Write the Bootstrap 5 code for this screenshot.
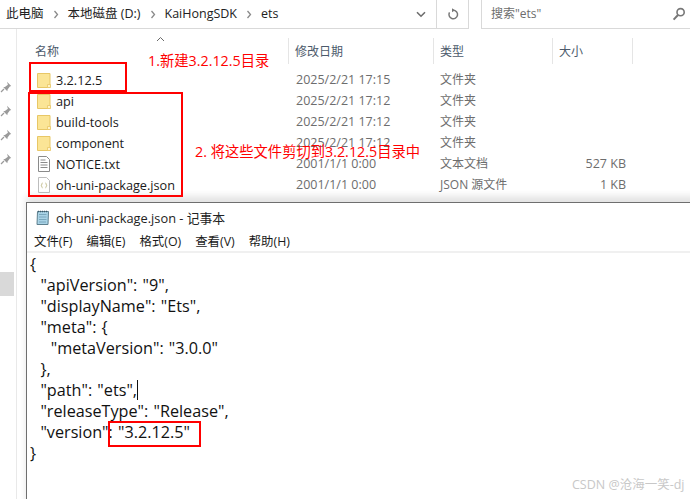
<!DOCTYPE html>
<html lang="zh">
<head>
<meta charset="utf-8">
<title>ets</title>
<link href="https://cdn.jsdelivr.net/npm/bootstrap@5.3.0/dist/css/bootstrap.min.css" rel="stylesheet">
<style>
html,body{margin:0;background:#fff;overflow:hidden}
.desk{position:relative;width:690px;height:499px;overflow:hidden;background:#fff;font-family:"Open Sans","Noto Sans CJK SC",sans-serif;font-size:12.5px;line-height:16px;color:#1a1a1a}
.topbar{height:29px}
.crumbs{width:469px;border-bottom:1px solid #d9d9d9;border-right:1px solid #d9d9d9;padding-left:6px;gap:9px;font-size:12.5px;color:#222}
.sep{color:#8a8a8a;width:6px}
.dropcell{width:32px;height:28px;border-right:1px solid #d9d9d9}
.refcell{width:31px;height:28px}
.searchbox{margin-left:12px;flex:1;border-left:1px solid #d9d9d9;border-bottom:1px solid #d9d9d9;padding:0 4px 0 9px;color:#6d6d6d;font-size:12px}
.body-area{height:470px}
.navpane{width:17px;border-right:1px solid #e9e9e9;height:470px;padding-top:52px;gap:8px}
.pinrow{height:16px}
.grayblock{width:14px;height:24px;background:#d9d9d9;margin-top:95px}
.listpane{flex:1;position:relative}
.sortup{height:6px;padding:7px 0 0 139px;box-sizing:content-box}
.cols{display:grid;grid-template-columns:272px 145px 119px 80px;height:26px;margin-top:-4px}
.hcell{padding:6px 0 0 18px;color:#4c5a6b;height:26px;border-right:1px solid #e5e5e5;font-size:12px}
.hcell.wide{padding-left:6px}
.frow{display:grid;grid-template-columns:272px 145px 119px 73px;height:21px;align-items:center;color:#6d6d6d}
.rows{margin-top:5px}
.namecell{display:flex;align-items:center;gap:5px;padding-left:20px;color:#1a1a1a;font-size:12.7px}
.datecell{padding-left:7px}
.typecell{padding-left:6px;font-size:12px}
.sizecell{text-align:right}
.notewin{position:absolute;left:26px;top:202px;width:680px;height:310px;background:#fff;border:1px solid #6e6e6e;border-bottom:0;box-shadow:0 -6px 7px rgba(0,0,0,.11)}
.wintitle{height:29px;padding-left:8px;gap:5px;color:#222;font-size:12.8px}
.winmenu{height:19px;padding-left:7px;gap:14px;color:#1a1a1a;font-size:12.4px}
.menurule{height:2px;background:#f0f0f0}
.notetext{margin:0;padding:1px 0 0 3px;font-family:"Open Sans","Liberation Sans",sans-serif;font-size:16.2px;word-spacing:1px;line-height:21px;color:#111;white-space:pre;overflow:visible}
.caret-mark{display:inline-block;width:1px;height:20px;background:#111;vertical-align:-4px}
.redbox{position:absolute;border:2px solid #f00}
.box-a{left:29px;top:62px;width:98px;height:30px}
.box-b{left:28px;top:92px;width:155px;height:105px}
.box-c{left:108px;top:421px;width:93px;height:26px}
.redtext{position:absolute;color:#f00;font-size:14.3px;line-height:18px;white-space:nowrap}
.note-a{left:148px;top:52px}
.note-b{left:195px;top:143px}
.wmark{position:absolute;left:572px;top:477px;color:#c8c8c8;font-size:12.5px;line-height:16px;white-space:nowrap}
</style>
</head>
<body>
<div class="desk">
  <div class="topbar d-flex">
    <div class="crumbs d-flex align-items-center">
      <span>此电脑</span><span class="sep"><svg width="6" height="9" viewBox="0 0 6 9"><path d="M1.5 1l3 3.5-3 3.5" fill="none" stroke="#8a8a8a" stroke-width="1.3"/></svg></span>
      <span>本地磁盘 (D:)</span><span class="sep"><svg width="6" height="9" viewBox="0 0 6 9"><path d="M1.5 1l3 3.5-3 3.5" fill="none" stroke="#8a8a8a" stroke-width="1.3"/></svg></span>
      <span>KaiHongSDK</span><span class="sep"><svg width="6" height="9" viewBox="0 0 6 9"><path d="M1.5 1l3 3.5-3 3.5" fill="none" stroke="#8a8a8a" stroke-width="1.3"/></svg></span>
      <span>ets</span>
      <div class="ms-auto d-flex">
        <div class="dropcell d-flex align-items-center justify-content-center"><svg width="10" height="7" viewBox="0 0 10 7"><path d="M1 1.2l4 4 4-4" fill="none" stroke="#6d6d6d" stroke-width="1.6"/></svg></div>
        <div class="refcell d-flex align-items-center justify-content-center"><svg width="12" height="13" viewBox="0 0 12 13"><path d="M6.2 2.2a4.3 4.3 0 1 1-3.7 2.2" fill="none" stroke="#777" stroke-width="1.5"/><path d="M5 .3v4l3-2z" fill="#777"/></svg></div>
      </div>
    </div>
    <div class="searchbox d-flex align-items-center justify-content-between">
      <span>搜索"ets"</span>
      <svg width="14" height="14" viewBox="0 0 14 14"><circle cx="8.6" cy="5.2" r="3.6" fill="none" stroke="#777" stroke-width="1.6"/><path d="M6 8l-4.4 4.6" stroke="#777" stroke-width="2"/></svg>
    </div>
  </div>
  <div class="body-area d-flex">
    <div class="navpane d-flex flex-column">
      <div class="pinrow"><svg class="d-block" width="12" height="12" viewBox="0 0 12 12"><use href="#pinic"/></svg></div>
      <div class="pinrow"><svg class="d-block" width="12" height="12" viewBox="0 0 12 12"><use href="#pinic"/></svg></div>
      <div class="pinrow"><svg class="d-block" width="12" height="12" viewBox="0 0 12 12"><use href="#pinic"/></svg></div>
      <div class="pinrow"><svg class="d-block" width="12" height="12" viewBox="0 0 12 12"><use href="#pinic"/></svg></div>
      <div class="grayblock"></div>
    </div>
    <div class="listpane">
      <div class="sortup"><svg class="d-block" width="9" height="6" viewBox="0 0 9 6"><path d="M1 5l3.5-3.5L8 5" fill="none" stroke="#6a6a6a"/></svg></div>
      <div class="cols">
        <div class="hcell">名称</div>
        <div class="hcell wide">修改日期</div>
        <div class="hcell wide">类型</div>
        <div class="hcell wide">大小</div>
      </div>
      <div class="rows">
        <div class="frow"><div class="namecell"><svg width="14" height="16" viewBox="0 0 14 16"><use href="#foldic"/></svg><span>3.2.12.5</span></div><div class="datecell">2025/2/21 17:15</div><div class="typecell">文件夹</div><div class="sizecell"></div></div>
        <div class="frow"><div class="namecell"><svg width="14" height="16" viewBox="0 0 14 16"><use href="#foldic"/></svg><span>api</span></div><div class="datecell">2025/2/21 17:12</div><div class="typecell">文件夹</div><div class="sizecell"></div></div>
        <div class="frow"><div class="namecell"><svg width="14" height="16" viewBox="0 0 14 16"><use href="#foldic"/></svg><span>build-tools</span></div><div class="datecell">2025/2/21 17:12</div><div class="typecell">文件夹</div><div class="sizecell"></div></div>
        <div class="frow"><div class="namecell"><svg width="14" height="16" viewBox="0 0 14 16"><use href="#foldic"/></svg><span>component</span></div><div class="datecell">2025/2/21 17:12</div><div class="typecell">文件夹</div><div class="sizecell"></div></div>
        <div class="frow"><div class="namecell"><svg width="14" height="16" viewBox="0 0 14 16"><path d="M1.5.5h8l3 3v12h-11z" fill="#fff" stroke="#8a8a8a"/><path d="M3.5 4h5M3.5 6.5h7M3.5 9h7M3.5 11.5h7" stroke="#8a8a8a"/></svg><span>NOTICE.txt</span></div><div class="datecell">2001/1/1 0:00</div><div class="typecell">文本文档</div><div class="sizecell">527 KB</div></div>
        <div class="frow"><div class="namecell"><svg width="14" height="16" viewBox="0 0 14 16"><path d="M1.5.5h8l3 3v12h-11z" fill="#fff" stroke="#bdbdbd"/><path d="M5.5 6c-1 0-.5 2-1.2 2.4.7.4.2 2.4 1.2 2.4M8.5 6c1 0 .5 2 1.2 2.4-.7.4-.2 2.4-1.2 2.4" fill="none" stroke="#b9b27a" stroke-width=".9"/></svg><span>oh-uni-package.json</span></div><div class="datecell">2001/1/1 0:00</div><div class="typecell">JSON 源文件</div><div class="sizecell">1 KB</div></div>
      </div>
    </div>
  </div>

  <div class="notewin">
    <div class="wintitle d-flex align-items-center">
      <svg width="16" height="16" viewBox="0 0 16 16"><path d="M2.5 1.5h11l-.5 13h-11z" fill="#a9d3e6" stroke="#5d7f8e"/><path d="M4 4.5h7.5M4 7h7.5M4 9.5h7.5M4 12h7" stroke="#6f9db2" stroke-width=".8"/><path d="M3 1.5h10" stroke="#39596a" stroke-width="1.6" stroke-dasharray="1 1"/></svg>
      <span>oh-uni-package.json - 记事本</span>
    </div>
    <div class="winmenu d-flex align-items-center">
      <span>文件(F)</span><span>编辑(E)</span><span>格式(O)</span><span>查看(V)</span><span>帮助(H)</span>
    </div>
    <div class="menurule"></div>
<pre class="notetext">{
  "apiVersion": "9",
  "displayName": "Ets",
  "meta": {
    "metaVersion": "3.0.0"
  },
  "path": "ets",<span class="caret-mark"></span>
  "releaseType": "Release",
  "version": "3.2.12.5"
}</pre>
  </div>

  <div class="redbox box-a"></div>
  <div class="redbox box-b"></div>
  <div class="redbox box-c"></div>
  <div class="redtext note-a">1.新建3.2.12.5目录</div>
  <div class="redtext note-b">2. 将这些文件剪切到3.2.12.5目录中</div>
  <div class="wmark">CSDN @沧海一笑-dj</div>

  <svg width="0" height="0" class="position-absolute">
    <defs>
      <g id="pinic"><path d="M7 .8l4.2 4.2-1.4.6-2.2 3-.3 1.6-4-4 1.6-.3 3-2.2z" fill="#9a9a9a"/><path d="M4 8l-3 3" stroke="#9a9a9a" stroke-width="1.2"/></g>
      <g id="foldic"><path d="M.5 1.5h12.5v14H.5z" fill="#fbe596" stroke="#e8c766"/><path d="M10.5 12.5h3v3h-3z" fill="#fff3c9" stroke="#e8c766" stroke-width=".8"/></g>
    </defs>
  </svg>
</div>
<script src="https://cdn.jsdelivr.net/npm/bootstrap@5.3.0/dist/js/bootstrap.bundle.min.js"></script>
</body>
</html>
